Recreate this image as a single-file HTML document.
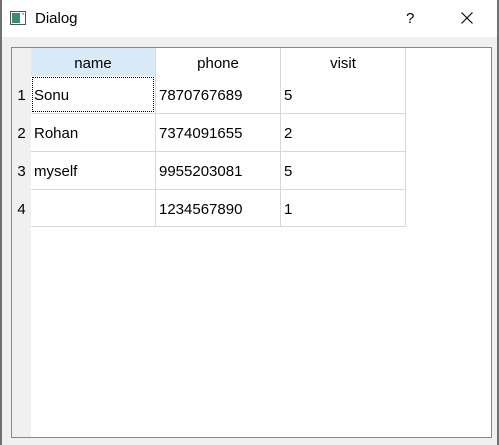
<!DOCTYPE html>
<html><head><style>
*{margin:0;padding:0;box-sizing:border-box}
body{width:499px;height:445px;background:#f0f0f0;font-family:"Liberation Sans",sans-serif;font-size:15px;color:#000;position:relative;overflow:hidden}
.win{position:absolute;left:0;top:0;width:499px;height:445px;border-left:2px solid #707070;border-right:2px solid #707070;}
.title{position:absolute;left:0;top:0;width:499px;height:37px;background:#fff}
.frame{position:absolute;left:11px;top:47px;width:481px;height:391px;border:1px solid #828790;background:#fff}
.vh{position:absolute;left:0;top:0;width:19px;height:389px;background:#f0f0f0}
.cell{position:absolute;border-right:1px solid #d8d8d8;border-bottom:1px solid #d8d8d8;background:#fff;line-height:40px;padding-left:3px}
.hd{position:absolute;top:0;height:28px;line-height:32px;text-align:center;border-right:1px solid #d8d8d8;background:#fff}
.rn{position:absolute;left:0;width:19px;text-align:center;line-height:40px;background:#f0f0f0}
</style></head><body>
<div class="title">
<svg style="position:absolute;left:10px;top:11px" width="16" height="14"><rect x="0.5" y="0.5" width="15" height="13" fill="#fff" stroke="#555"/><rect x="2" y="2" width="8" height="10" fill="#3a8a7a"/><rect x="12" y="2" width="2" height="2" fill="#aaa"/></svg>
<span style="position:absolute;left:35px;top:10px;font-size:15px">Dialog</span>
<span style="position:absolute;left:406px;top:10px;font-size:15px">?</span>
<svg style="position:absolute;left:461px;top:12px" width="12" height="12"><path d="M0.5 0.5L11.5 11.5M11.5 0.5L0.5 11.5" stroke="#000" stroke-width="1.1"/></svg>
</div>
<div class="win"></div>
<div class="frame">
<div class="vh"></div>
<div class="hd" style="left:19px;width:125px;background:#d9ebf9">name</div>
<div class="hd" style="left:144px;width:125px">phone</div>
<div class="hd" style="left:269px;width:125px">visit</div>
<div class="rn" style="top:28px">1</div>
<div class="rn" style="top:66px">2</div>
<div class="rn" style="top:104px">3</div>
<div class="rn" style="top:142px">4</div>

<div class="cell" style="left:19px;top:28px;width:125px;height:38px"><div style="position:absolute;left:1px;top:1px;right:1px;bottom:1px;border:1px dotted #000"></div>Sonu</div>
<div class="cell" style="left:144px;top:28px;width:125px;height:38px">7870767689</div>
<div class="cell" style="left:269px;top:28px;width:125px;height:38px">5</div>
<div class="cell" style="left:19px;top:66px;width:125px;height:38px">Rohan</div>
<div class="cell" style="left:144px;top:66px;width:125px;height:38px">7374091655</div>
<div class="cell" style="left:269px;top:66px;width:125px;height:38px">2</div>
<div class="cell" style="left:19px;top:104px;width:125px;height:38px">myself</div>
<div class="cell" style="left:144px;top:104px;width:125px;height:38px">9955203081</div>
<div class="cell" style="left:269px;top:104px;width:125px;height:38px">5</div>
<div class="cell" style="left:19px;top:142px;width:125px;height:37px"></div>
<div class="cell" style="left:144px;top:142px;width:125px;height:37px">1234567890</div>
<div class="cell" style="left:269px;top:142px;width:125px;height:37px">1</div>
</div>
</body></html>
